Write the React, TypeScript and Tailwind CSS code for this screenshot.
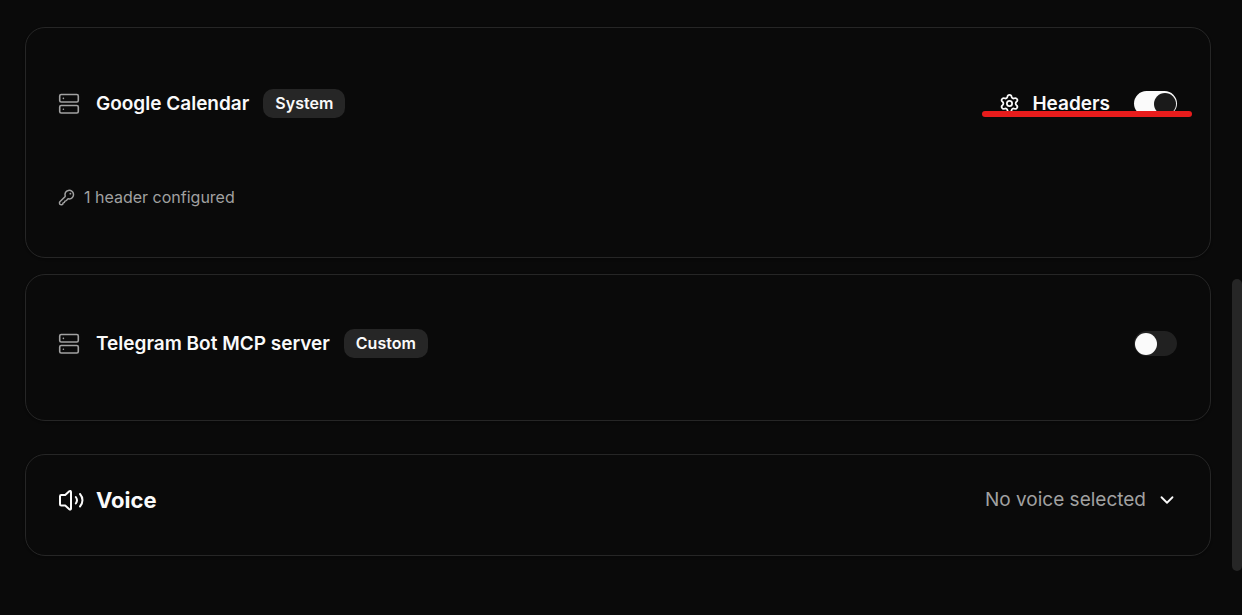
import type { ReactNode } from "react";
import { ChevronDown, Settings } from "lucide-react";

const ServerIcon = () => (
  <svg viewBox="0 0 22 22" className="size-[22px] text-neutral-400" fill="none" stroke="currentColor" strokeWidth="1.6" aria-hidden="true">
    <rect x="1.7" y="1.500" width="18.600" height="7.500" rx="1.5" />
    <rect x="1.7" y="12.500" width="18.600" height="7.500" rx="1.5" />
    <path d="M5.400 5.400h.01M5.400 16.200h.01" strokeLinecap="round" />
  </svg>
);

const KeyIcon = () => (
  <svg viewBox="0 0 24 24" className="size-[18px]" fill="none" stroke="currentColor" strokeWidth="2" strokeLinecap="round" strokeLinejoin="round" aria-hidden="true">
    <path d="M15 14.500a5.700 5.700 0 1 0-5.400-3.900c.1.400 0 .7-.3 1L2.500 18.400c-.4.400-.6.800-.5 1.300l.2 1.500c.1.500.4.8.9.9l1.500.2c1.300.2 1.900-.4 1.900-1.700 0-.7.4-1 1.100-1 .8 0 1.200-.4 1.200-1.200 0-.8.400-1.200 1.200-1.200.6 0 1-.2 1.400-.7l1.500-1.700c.3-.4.6-.5 1-.4.4.1.700.1 1.100.1Z" />
    <path d="M16.500 7.500h.01" strokeWidth="2.500" />
  </svg>
);

const VolumeIcon = () => (
  <svg viewBox="0 0 26 22" className="h-[22px] w-[26px]" fill="none" stroke="currentColor" strokeWidth="2" strokeLinecap="round" strokeLinejoin="round" aria-hidden="true">
    <path d="M13 3v16.500c0 1.200-.9 1.400-1.700.7L7.200 16.500H3.300c-.9 0-1.300-.4-1.300-1.300V7.300C2 6.400 2.400 6 3.300 6h3.900l4.100-3.700c.8-.7 1.700-.5 1.700.7Z" />
    <path d="M17.800 8c1.400 1.900 1.400 4.600 0 6.500M22 5c3.300 3.700 3.300 8.800 0 12.500" />
  </svg>
);

const Card = ({ children, className }: { children: ReactNode; className: string }) => (
  <section className={`w-full rounded-[20px] border border-[#262626] shadow-sm ${className}`}>
    {children}
  </section>
);

const Toggle = ({ label, defaultChecked }: { label: string; defaultChecked?: boolean }) => (
  <input
    type="checkbox"
    role="switch"
    aria-label={label}
    defaultChecked={defaultChecked}
    className="flex h-[25px] w-[43px] shrink-0 cursor-pointer appearance-none items-center rounded-full bg-[#212121] px-px before:size-[22px] before:rounded-full before:bg-neutral-50 checked:justify-end checked:bg-neutral-50 checked:before:bg-[#1a1a1a]"
  />
);

interface ServerTitleProps {
  name: string;
  badge: string;
}

const ServerTitle = ({ name, badge }: ServerTitleProps) => (
  <div className="flex items-center">
    <ServerIcon />
    <h3 className="ml-4 text-[19px] leading-7 font-semibold">{name}</h3>
    <span className="ml-3.5 rounded-[10px] bg-[#262626] px-3 py-0.5 text-base leading-[25px] font-semibold">
      {badge}
    </span>
  </div>
);

const App = () => {
  return (
    <div className="relative min-h-screen bg-[#0a0a0a] pt-[27px] pr-[31px] pb-[59px] pl-[25px] font-[Inter,sans-serif] text-neutral-50">
      <main className="flex flex-col">
        <Card className="px-8 pt-[61px] pb-12">
          <div className="relative flex items-center justify-between">
            <ServerTitle name="Google Calendar" badge="System" />
            <div className="flex items-center gap-6 pr-px">
              <button type="button" className="flex cursor-pointer items-center gap-3 text-[19px] leading-7 font-semibold">
                <Settings size={21} strokeWidth={2} aria-hidden="true" />
                Headers
              </button>
              <Toggle label="Enable Google Calendar" defaultChecked />
            </div>
            <div className="absolute -right-3.5 bottom-px h-1.5 w-[210px] rounded-full bg-[#e81c1c]" />
          </div>
          <p className="mt-[67px] flex items-center gap-2 text-base leading-6 text-neutral-400">
            <KeyIcon />
            1 header configured
          </p>
        </Card>

        <Card className="mt-4 flex items-center justify-between pt-[54px] pr-[33px] pb-[62px] pl-8">
          <ServerTitle name="Telegram Bot MCP server" badge="Custom" />
          <Toggle label="Enable Telegram Bot MCP server" />
        </Card>

        <Card className="mt-[33px]">
          <button type="button" aria-expanded="false" className="flex w-full cursor-pointer items-center justify-between px-8 pt-[30px] pb-10">
            <span className="flex items-center gap-3 text-[22px] leading-[30px] font-bold">
              <VolumeIcon />
              Voice
            </span>
            <span className="flex items-center gap-2.5 text-[19px] leading-[30px] text-neutral-400">
              No voice selected
              <ChevronDown size={22} className="text-neutral-50" aria-hidden="true" />
            </span>
          </button>
        </Card>
      </main>

      {/* scrollbar thumb */}
      <div className="absolute top-[279px] right-0 h-[292px] w-2.5 rounded-full bg-[#262626]" />
    </div>
  );
};

export default App;
